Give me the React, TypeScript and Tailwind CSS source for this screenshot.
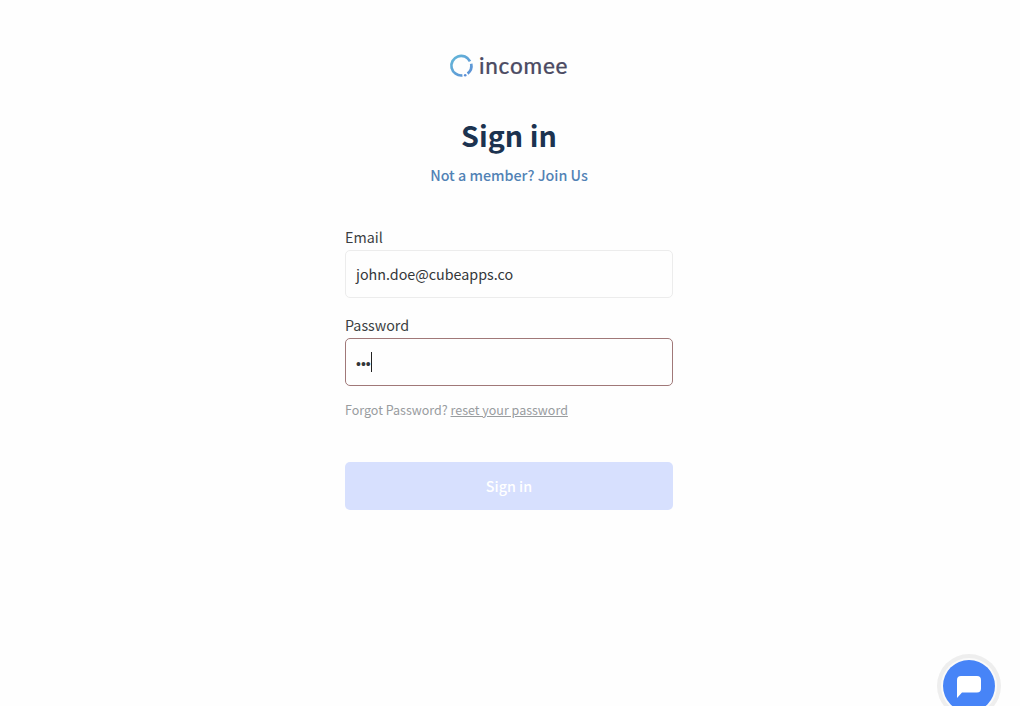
import type { ReactNode } from 'react'

interface FieldProps {
  label: string
  active?: boolean
  className?: string
  children: ReactNode
}

function Field({ label, active = false, className = '', children }: FieldProps) {
  return (
    <div className={className}>
      <div className="h-[25px] text-[14.3px] leading-6 text-[#3b3e42]">{label}</div>
      <div
        className={`flex h-12 items-center rounded-[5px] border px-[10px] text-[14.3px] text-[#333639] ${
          active ? 'border-[#a07878]' : 'border-[#ececec]'
        }`}
      >
        {children}
      </div>
    </div>
  )
}

function Logo() {
  return (
    <svg width="124" height="28" viewBox="0 0 124 28" fill="none" aria-label="incomee">
      <defs>
        <linearGradient id="ring" x1="0" y1="0" x2="1" y2="1">
          <stop offset="0" stopColor="#63b7d8" />
          <stop offset="1" stopColor="#5c8fd6" />
        </linearGradient>
      </defs>
      <path
        d="M15.4 23.4A9.8 9.8 0 1 1 23 9.4M24.2 11.8A9.8 9.8 0 0 1 20.6 21.6"
        stroke="url(#ring)"
        strokeWidth="2.7"
      />
      <circle cx="18.2" cy="23.2" r="1.3" fill="#5c8fd6" />
      <text
        x="32"
        y="21.5"
        textLength="88.5"
        lengthAdjust="spacing"
        fontFamily="Lato, sans-serif"
        fontSize="22.5"
        fontWeight="500"
        fill="#4c4b63"
        stroke="#4c4b63"
        strokeWidth="0.2"
      >
        incomee
      </text>
    </svg>
  )
}

function ChatButton() {
  return (
    <button
      aria-label="Open chat"
      className="absolute top-[660px] left-[943px] flex h-[52px] w-[52px] items-center justify-center rounded-full bg-[#4784f7] shadow-[0_0_0_2px_#fafafa,0_0_0_6px_#eeeeee]"
    >
      <svg width="26" height="24" viewBox="0 0 26 24" aria-hidden="true">
        <path d="M5 2h16a4 4 0 0 1 4 4v8.5a4 4 0 0 1-4 4H6L1 24V6a4 4 0 0 1 4-4z" fill="#fff" />
      </svg>
    </button>
  )
}

export default function App() {
  return (
    <div className="relative h-[706px] w-[1020px] overflow-hidden bg-[#fefefe] font-['Noto_Sans_CJK_SC',sans-serif]">
      <main className="ml-[345px] flex w-[328px] flex-col pt-[52px]">
        <div className="flex justify-center">
          <Logo />
        </div>
        <h1 className="mt-[31px] text-center text-[28.7px] leading-[48px] font-bold text-[#1c3350]">
          Sign in
        </h1>
        <a className="mt-1 text-center text-[14.3px] leading-6 font-medium text-[#5182b5]">
          Not a member? Join Us
        </a>

        <Field label="Email" className="mt-[38px]">
          john.doe@cubeapps.co
        </Field>
        <Field label="Password" active className="mt-[15px]">
          <span className="pt-1 font-['Liberation_Sans',sans-serif] text-[14px]">•••</span>
          <span className="h-5 w-px bg-[#222]" />
        </Field>

        <p className="mt-[14px] text-[12.5px] leading-5 text-[#999c9f]">
          Forgot Password? <a className="underline">reset your password</a>
        </p>

        <button
          disabled
          className="mt-[42px] h-12 rounded-[5px] bg-[#d7e0fe] text-[14.3px] font-medium text-white"
        >
          Sign in
        </button>
      </main>
      <ChatButton />
    </div>
  )
}
